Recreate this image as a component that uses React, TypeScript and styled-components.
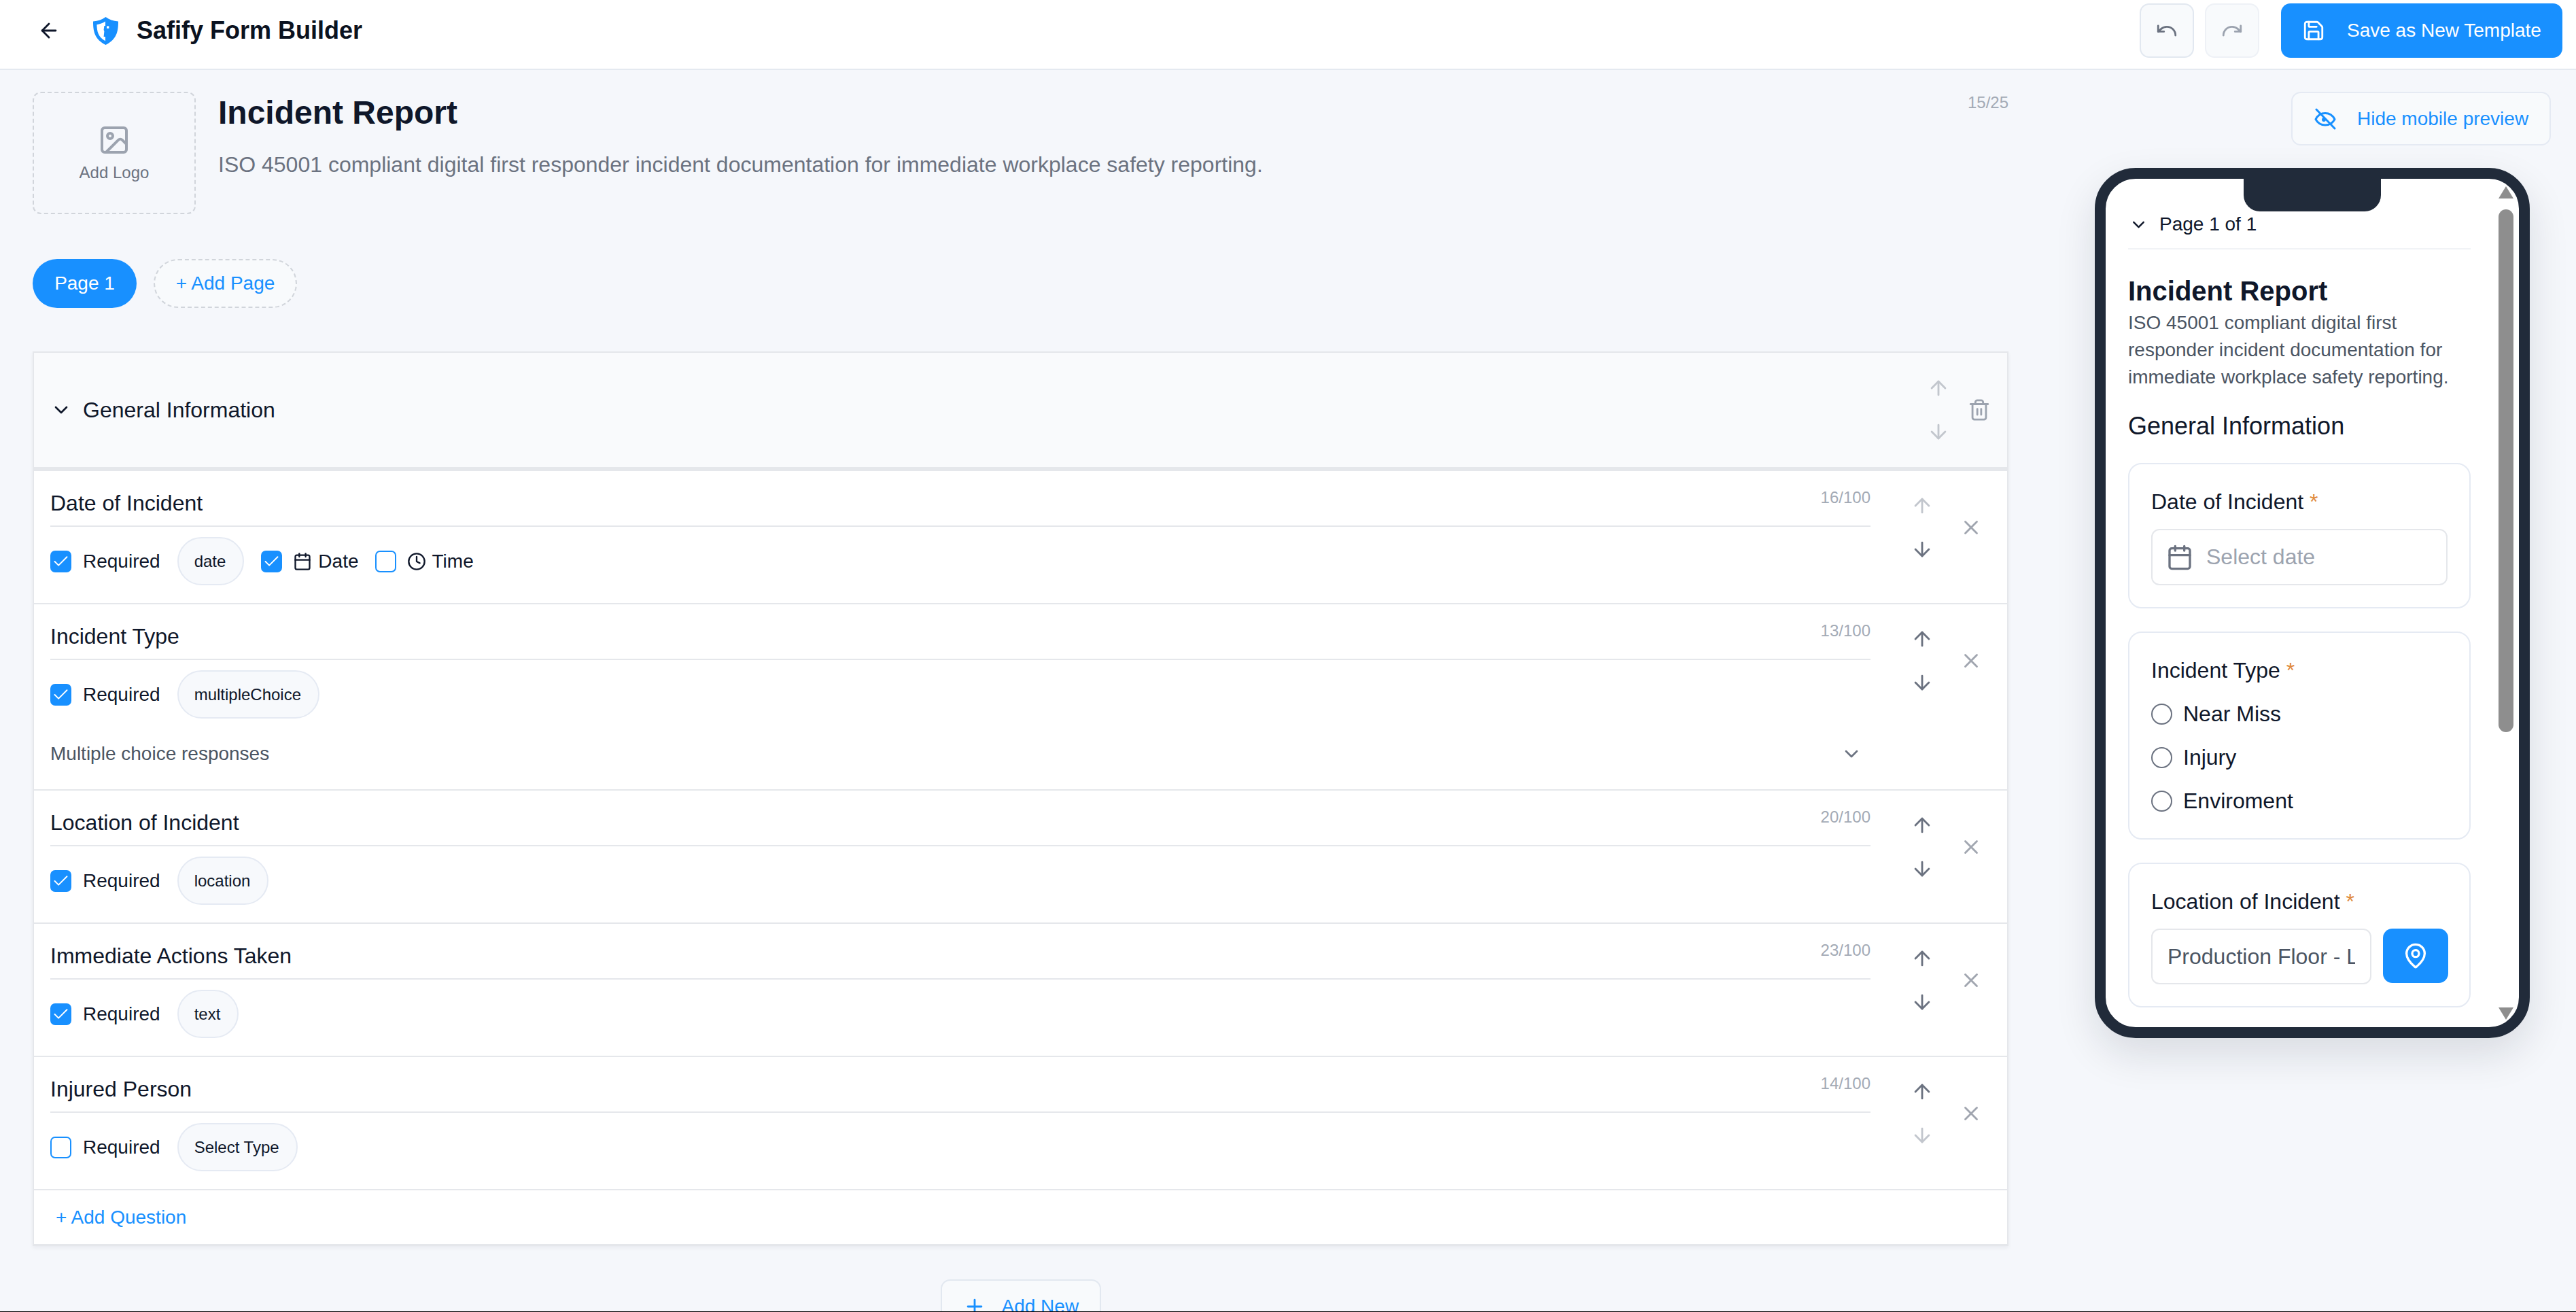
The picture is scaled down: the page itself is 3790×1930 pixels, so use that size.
import React from 'react';
import styled, { createGlobalStyle } from 'styled-components';
import {
  ArrowDown,
  ArrowLeft,
  ArrowUp,
  Calendar,
  Check,
  ChevronDown,
  Clock,
  Image as ImageIcon,
  MapPin,
  Plus,
  Redo,
  Save,
  Trash2,
  Undo,
  X,
} from 'lucide-react';

const BLUE = '#1890ff';
const INK = '#0f172a';

const GlobalStyle = createGlobalStyle`
  html, body {
    margin: 0;
    padding: 0;
    height: 100%;
    background: #f5f7fb;
    font-family: "Liberation Sans", Arial, sans-serif;
    color: ${INK};
  }
  * {
    box-sizing: border-box;
  }
`;

// Page frame
const Page = styled.div`
  display: flex;
  flex-direction: column;
  height: 100vh;
  overflow: hidden;
  border-bottom: 1px solid #000;
`;

const Header = styled.header`
  display: flex;
  align-items: center;
  justify-content: space-between;
  flex: none;
  height: 103px;
  padding: 0 20px 11px 55px;
  background: #fff;
  border-bottom: 2px solid #e4e9f0;
`;

const HeaderLeft = styled.div`
  display: flex;
  align-items: center;
`;

const BackButton = styled.span`
  display: flex;
  margin-right: 48px;
  color: ${INK};
`;

const AppTitle = styled.span`
  margin-left: 27px;
  font-size: 36px;
  font-weight: 700;
  color: #0b1220;
`;

const HeaderRight = styled.div`
  display: flex;
  align-items: center;
`;

const HistoryButton = styled.span<{ $off?: boolean }>`
  display: flex;
  align-items: center;
  justify-content: center;
  width: 80px;
  height: 80px;
  margin-right: ${(p) => (p.$off ? '32px' : '16px')};
  background: #f8fafc;
  border: 2px solid ${(p) => (p.$off ? '#eef1f6' : '#e2e8f0')};
  border-radius: 14px;
  color: ${(p) => (p.$off ? '#9ca3af' : '#6b7280')};
`;

const SaveButton = styled.span`
  display: flex;
  align-items: center;
  gap: 32px;
  width: 414px;
  height: 80px;
  padding-left: 31px;
  background: ${BLUE};
  border-radius: 14px;
  color: #fff;
  font-size: 28px;
`;

const Main = styled.main`
  display: flex;
  flex: 1;
  min-height: 0;
`;

// Left column: the form
const FormColumn = styled.section`
  flex: none;
  width: 2955px;
  padding: 32px 0 0 48px;
`;

const TopRow = styled.div`
  display: flex;
  gap: 33px;
`;

const LogoBox = styled.div`
  display: flex;
  flex: none;
  flex-direction: column;
  align-items: center;
  justify-content: center;
  gap: 10px;
  width: 240px;
  height: 180px;
  border: 2.5px dashed #d1d5db;
  border-radius: 12px;
  color: #9ca3af;
`;

const LogoLabel = styled.span`
  font-size: 24px;
  color: #6b7280;
`;

const TitleBlock = styled.div`
  flex: 1;
  padding-top: 3px;
`;

const TitleRow = styled.div`
  display: flex;
  align-items: flex-start;
  justify-content: space-between;
`;

const FormTitle = styled.h1`
  margin: 0;
  font-size: 48px;
  line-height: 56px;
  font-weight: 700;
`;

const Counter = styled.span`
  font-size: 24px;
  line-height: 24px;
  color: #a3aab5;
`;

const FormCounter = styled(Counter)`
  margin-top: 1px;
`;

const FormDescription = styled.p`
  margin: 28px 0 0;
  font-size: 32px;
  line-height: 40px;
  color: #6b7280;
`;

const PageTabs = styled.div`
  display: flex;
  gap: 25px;
  margin-top: 66px;
`;

const PageTab = styled.span<{ $add?: boolean }>`
  display: flex;
  align-items: center;
  justify-content: center;
  height: 72px;
  width: ${(p) => (p.$add ? '211px' : '153px')};
  border-radius: 36px;
  font-size: 28px;
  color: ${(p) => (p.$add ? BLUE : '#fff')};
  background: ${(p) => (p.$add ? '#f8fafc' : BLUE)};
  border: ${(p) => (p.$add ? '2.5px dashed #d1d5db' : 'none')};
`;

const Section = styled.div`
  margin-top: 64px;
  background: #fff;
  border: 2px solid #e5e7eb;
  border-bottom-width: 3px;
  box-shadow: 0 3px 6px rgba(15, 23, 42, 0.05);
`;

const SectionHeader = styled.div`
  display: flex;
  align-items: center;
  height: 174px;
  padding: 0 24px;
  background: #f9fafc;
  border-bottom: 6px solid #e5e7eb;
  color: ${INK};
`;

const SectionName = styled.span`
  flex: 1;
  margin-left: 16px;
  font-size: 32px;
`;

const SectionArrows = styled.div`
  display: flex;
  flex-direction: column;
  gap: 30px;
  margin-right: 26px;
`;

const QuestionRow = styled.div`
  display: flex;
  align-items: flex-start;
  padding: 0 0 26px 24px;
  border-bottom: 2px solid #e5e7eb;
`;

const QuestionBody = styled.div`
  flex: 1;
  min-width: 0;
  padding-top: 27px;
`;

const QuestionTitleLine = styled.div`
  display: flex;
  align-items: flex-start;
  justify-content: space-between;
  padding-bottom: 13px;
  border-bottom: 2px solid #e5e7eb;
`;

const QuestionTitle = styled.span`
  font-size: 32px;
  line-height: 40px;
`;

const QuestionMeta = styled.div`
  display: flex;
  align-items: center;
  margin-top: 15px;
  height: 71px;
  font-size: 28px;
`;

const CheckField = styled.label`
  display: flex;
  align-items: center;
  gap: 17px;
`;

const CheckBox = styled.span<{ $on?: boolean }>`
  display: flex;
  flex: none;
  align-items: center;
  justify-content: center;
  width: 31px;
  height: 32px;
  border-radius: 7px;
  border: 2.5px solid ${BLUE};
  background: ${(p) => (p.$on ? BLUE : '#fff')};
  color: #fff;
`;

const TypeChip = styled.span`
  display: flex;
  align-items: center;
  height: 71px;
  margin: 0 25px;
  padding: 0 25px 0 23px;
  background: #f7f9fc;
  border: 2px solid #e5eaf3;
  border-radius: 36px;
  font-size: 24px;
`;

const PickerField = styled.label`
  display: flex;
  align-items: center;
  gap: 16px;
  margin-right: 24px;
`;

const PickerLabel = styled.span`
  display: flex;
  align-items: center;
  gap: 9px;
`;

const ResponsesToggle = styled.div`
  display: flex;
  align-items: center;
  justify-content: space-between;
  height: 53px;
  margin-top: 25px;
  padding-right: 12px;
  font-size: 28px;
  color: #4b5563;
`;

const ToggleIcon = styled.span`
  display: flex;
  color: #6b7280;
`;

const RowArrows = styled.div`
  display: flex;
  flex: none;
  flex-direction: column;
  gap: 30px;
  margin: 34px 0 0 59px;
`;

const ArrowIcon = styled.span<{ $off?: boolean }>`
  display: flex;
  color: ${(p) => (p.$off ? '#c2c6cd' : '#6b7280')};
`;

const RemoveIcon = styled.span`
  display: flex;
  flex: none;
  margin: 66px 36px 0 38px;
  color: #a1a6b0;
`;

const TrashIcon = styled.span`
  display: flex;
  color: #9ca3af;
`;

const AddQuestion = styled.div`
  display: flex;
  align-items: center;
  height: 79px;
  padding-left: 32px;
  font-size: 28px;
  color: ${BLUE};
`;

const AddNewButton = styled.span`
  display: flex;
  align-items: center;
  gap: 23px;
  width: 236px;
  height: 79px;
  margin: 49px auto 0;
  padding-left: 31px;
  background: #f8fafc;
  border: 2px solid #e2e8f0;
  border-radius: 14px;
  font-size: 28px;
  color: ${BLUE};
`;

// Right column: the mobile preview
const PreviewColumn = styled.aside`
  display: flex;
  flex: 1;
  flex-direction: column;
  align-items: flex-end;
  padding: 32px 37px 0 0;
`;

const HidePreviewButton = styled.span`
  display: flex;
  align-items: center;
  gap: 31px;
  width: 382px;
  height: 79px;
  padding-left: 32px;
  background: #f8fafc;
  border: 2.5px solid #e5eaf3;
  border-radius: 14px;
  font-size: 28px;
  color: ${BLUE};
`;

const Phone = styled.div`
  flex: none;
  width: 640px;
  height: 1280px;
  margin: 33px 31px 0 0;
  border: 16px solid #212b3a;
  border-radius: 60px;
  background: #fff;
  box-shadow: 0 24px 60px rgba(15, 23, 42, 0.12);
`;

const Screen = styled.div`
  position: relative;
  height: 100%;
  padding: 44px 71px 0 33px;
  border-radius: 44px;
  overflow: hidden;
`;

const Notch = styled.div`
  position: absolute;
  top: 0;
  left: 203px;
  width: 202px;
  height: 48px;
  background: #212b3a;
  border-radius: 0 0 24px 24px;
`;

const ScrollRail = styled.div`
  position: absolute;
  top: 11px;
  right: 8px;
  bottom: 11px;
  display: flex;
  flex-direction: column;
  width: 22px;
`;

const ScrollArrow = styled.div<{ $down?: boolean }>`
  height: 18px;
  margin-top: ${(p) => (p.$down ? 'auto' : '0')};
  background: #8e8e8e;
  clip-path: ${(p) =>
    p.$down
      ? 'polygon(0 0, 100% 0, 50% 100%)'
      : 'polygon(50% 0, 100% 100%, 0 100%)'};
`;

const ScrollThumb = styled.div`
  height: 769px;
  margin-top: 16px;
  background: #8e8e8e;
  border-radius: 11px;
`;

const PagerRow = styled.div`
  display: flex;
  align-items: center;
  gap: 16px;
  height: 60px;
  padding: 0 0 12px 1px;
  border-bottom: 2px solid #f1f3f6;
  font-size: 28px;
`;

const PreviewTitle = styled.h2`
  margin: 38px 0 0;
  font-size: 40px;
  line-height: 46px;
  font-weight: 700;
`;

const PreviewDescription = styled.p`
  margin: 4px 0 0;
  font-size: 28px;
  line-height: 40px;
  color: #4b5563;
`;

const PreviewSection = styled.h3`
  margin: 30px 0 32px;
  font-size: 36px;
  line-height: 44px;
  font-weight: 400;
`;

const Card = styled.div<{ $pad?: number }>`
  margin-bottom: 34px;
  padding: 35px 32px ${(p) => p.$pad ?? 32}px;
  border: 2px solid #e5eaf3;
  border-radius: 20px;
`;

const FieldLabel = styled.div`
  margin-bottom: 20px;
  font-size: 32px;
  line-height: 40px;
`;

const Star = styled.span`
  color: #e08a3c;
`;

const DateInput = styled.div`
  display: flex;
  align-items: center;
  gap: 19px;
  height: 83px;
  padding-left: 20px;
  border: 2px solid #e5e7eb;
  border-radius: 12px;
  font-size: 32px;
  color: #9ca3af;
`;

const InputIcon = styled.span`
  display: flex;
  color: #6b7280;
`;

const RadioList = styled.div`
  display: flex;
  flex-direction: column;
  gap: 24px;
  margin-top: 24px;
`;

const RadioRow = styled.label`
  display: flex;
  align-items: center;
  gap: 16px;
  height: 40px;
  font-size: 32px;
`;

const RadioDot = styled.span`
  flex: none;
  width: 31px;
  height: 31px;
  border: 2.4px solid #6b7280;
  border-radius: 50%;
`;

const LocationRow = styled.div`
  display: flex;
  align-items: flex-start;
  gap: 17px;
`;

const LocationInput = styled.input`
  flex: none;
  width: 324px;
  height: 82px;
  padding: 0 22px;
  border: 2px solid #e5e7eb;
  border-radius: 12px;
  outline: none;
  font-family: inherit;
  font-size: 32px;
  color: #4b5563;
`;

const PinButton = styled.span`
  display: flex;
  flex: none;
  align-items: center;
  justify-content: center;
  width: 96px;
  height: 80px;
  background: ${BLUE};
  border-radius: 14px;
  color: #fff;
`;

const ShieldLogo = () => (
  <svg width="37" height="41" viewBox="0 0 37 41">
    <path
      d="M18.5 0C23.5 3.6 29.5 6 37 6.4C37 21 35 32.5 18.5 41C2 32.5 0 21 0 6.4C7.5 6 13.5 3.6 18.5 0Z"
      fill={BLUE}
    />
    <path
      d="M18 6.5C14 9 10 10.6 5.4 11.2C5.6 21 7.4 29.5 18 35.2Z"
      fill="#fff"
    />
    <path d="M16.4 13h3.6v6l-1 1.5 1 1.5v7h-4.4l.8-8-.8-2z" fill={BLUE} />
    <path d="M20 13.4h3.4v3.4H20z" fill="#fff" />
  </svg>
);

const HideEyeIcon = () => (
  <svg
    width="32"
    height="32"
    viewBox="0 0 32 32"
    fill="none"
    stroke="currentColor"
    strokeWidth="3"
    strokeLinecap="round"
    strokeLinejoin="round"
  >
    <path d="M2 16.5C5 10.5 10 7.5 16 7.5s11 3 14 9c-3 5.5-8 8.5-14 8.5S5 22 2 16.5Z" />
    <circle cx="14" cy="17" r="3" fill="currentColor" stroke="none" />
    <path d="M3 2l27 28" />
  </svg>
);

const Tick = ({ on }: { on?: boolean }) => (
  <CheckBox $on={on}>{on && <Check size={30} strokeWidth={1.7} />}</CheckBox>
);

interface Question {
  title: string;
  count: string;
  type: string;
  required: boolean;
  upOff?: boolean;
  downOff?: boolean;
  pickers?: boolean;
  responses?: boolean;
}

const questions: Question[] = [
  { title: 'Date of Incident', count: '16/100', type: 'date', required: true, upOff: true, pickers: true },
  { title: 'Incident Type', count: '13/100', type: 'multipleChoice', required: true, responses: true },
  { title: 'Location of Incident', count: '20/100', type: 'location', required: true },
  { title: 'Immediate Actions Taken', count: '23/100', type: 'text', required: true },
  { title: 'Injured Person', count: '14/100', type: 'Select Type', required: false, downOff: true },
];

const App: React.FC = () => {
  return (
    <Page>
      <GlobalStyle />
      <Header>
        <HeaderLeft>
          <BackButton>
            <ArrowLeft size={34} />
          </BackButton>
          <ShieldLogo />
          <AppTitle>Safify Form Builder</AppTitle>
        </HeaderLeft>
        <HeaderRight>
          <HistoryButton>
            <Undo size={34} />
          </HistoryButton>
          <HistoryButton $off>
            <Redo size={34} />
          </HistoryButton>
          <SaveButton>
            <Save size={34} />
            Save as New Template
          </SaveButton>
        </HeaderRight>
      </Header>

      <Main>
        <FormColumn>
          <TopRow>
            <LogoBox>
              <ImageIcon size={48} />
              <LogoLabel>Add Logo</LogoLabel>
            </LogoBox>
            <TitleBlock>
              <TitleRow>
                <FormTitle>Incident Report</FormTitle>
                <FormCounter>15/25</FormCounter>
              </TitleRow>
              <FormDescription>
                ISO 45001 compliant digital first responder incident documentation for immediate workplace safety reporting.
              </FormDescription>
            </TitleBlock>
          </TopRow>

          <PageTabs>
            <PageTab>Page 1</PageTab>
            <PageTab $add>+ Add Page</PageTab>
          </PageTabs>

          <Section>
            <SectionHeader>
              <ChevronDown size={32} />
              <SectionName>General Information</SectionName>
              <SectionArrows>
                <ArrowIcon $off>
                  <ArrowUp size={34} />
                </ArrowIcon>
                <ArrowIcon $off>
                  <ArrowDown size={34} />
                </ArrowIcon>
              </SectionArrows>
              <TrashIcon>
                <Trash2 size={34} />
              </TrashIcon>
            </SectionHeader>

            {questions.map((q) => (
              <QuestionRow key={q.title}>
                <QuestionBody>
                  <QuestionTitleLine>
                    <QuestionTitle>{q.title}</QuestionTitle>
                    <Counter>{q.count}</Counter>
                  </QuestionTitleLine>
                  <QuestionMeta>
                    <CheckField>
                      <Tick on={q.required} />
                      Required
                    </CheckField>
                    <TypeChip>{q.type}</TypeChip>
                    {q.pickers && (
                      <>
                        <PickerField>
                          <Tick on />
                          <PickerLabel>
                            <Calendar size={28} />
                            Date
                          </PickerLabel>
                        </PickerField>
                        <PickerField>
                          <Tick />
                          <PickerLabel>
                            <Clock size={28} />
                            Time
                          </PickerLabel>
                        </PickerField>
                      </>
                    )}
                  </QuestionMeta>
                  {q.responses && (
                    <ResponsesToggle>
                      Multiple choice responses
                      <ToggleIcon>
                        <ChevronDown size={32} />
                      </ToggleIcon>
                    </ResponsesToggle>
                  )}
                </QuestionBody>
                <RowArrows>
                  <ArrowIcon $off={q.upOff}>
                    <ArrowUp size={34} />
                  </ArrowIcon>
                  <ArrowIcon $off={q.downOff}>
                    <ArrowDown size={34} />
                  </ArrowIcon>
                </RowArrows>
                <RemoveIcon>
                  <X size={34} />
                </RemoveIcon>
              </QuestionRow>
            ))}

            <AddQuestion>+ Add Question</AddQuestion>
          </Section>

          <AddNewButton>
            <Plus size={34} />
            Add New
          </AddNewButton>
        </FormColumn>

        <PreviewColumn>
          <HidePreviewButton>
            <HideEyeIcon />
            Hide mobile preview
          </HidePreviewButton>

          <Phone>
            <Screen>
              <Notch />
              <ScrollRail>
                <ScrollArrow />
                <ScrollThumb />
                <ScrollArrow $down />
              </ScrollRail>

              <PagerRow>
                <ChevronDown size={29} />
                Page 1 of 1
              </PagerRow>
              <PreviewTitle>Incident Report</PreviewTitle>
              <PreviewDescription>
                ISO 45001 compliant digital first responder incident documentation for immediate workplace safety reporting.
              </PreviewDescription>
              <PreviewSection>General Information</PreviewSection>

              <Card>
                <FieldLabel>
                  Date of Incident <Star>*</Star>
                </FieldLabel>
                <DateInput>
                  <InputIcon>
                    <Calendar size={40} />
                  </InputIcon>
                  Select date
                </DateInput>
              </Card>

              <Card $pad={35}>
                <FieldLabel>
                  Incident Type <Star>*</Star>
                </FieldLabel>
                <RadioList>
                  {['Near Miss', 'Injury', 'Enviroment'].map((option) => (
                    <RadioRow key={option}>
                      <RadioDot />
                      {option}
                    </RadioRow>
                  ))}
                </RadioList>
              </Card>

              <Card>
                <FieldLabel>
                  Location of Incident <Star>*</Star>
                </FieldLabel>
                <LocationRow>
                  <LocationInput readOnly value="Production Floor - Line 3" />
                  <PinButton>
                    <MapPin size={40} />
                  </PinButton>
                </LocationRow>
              </Card>
            </Screen>
          </Phone>
        </PreviewColumn>
      </Main>
    </Page>
  );
};

export default App;
